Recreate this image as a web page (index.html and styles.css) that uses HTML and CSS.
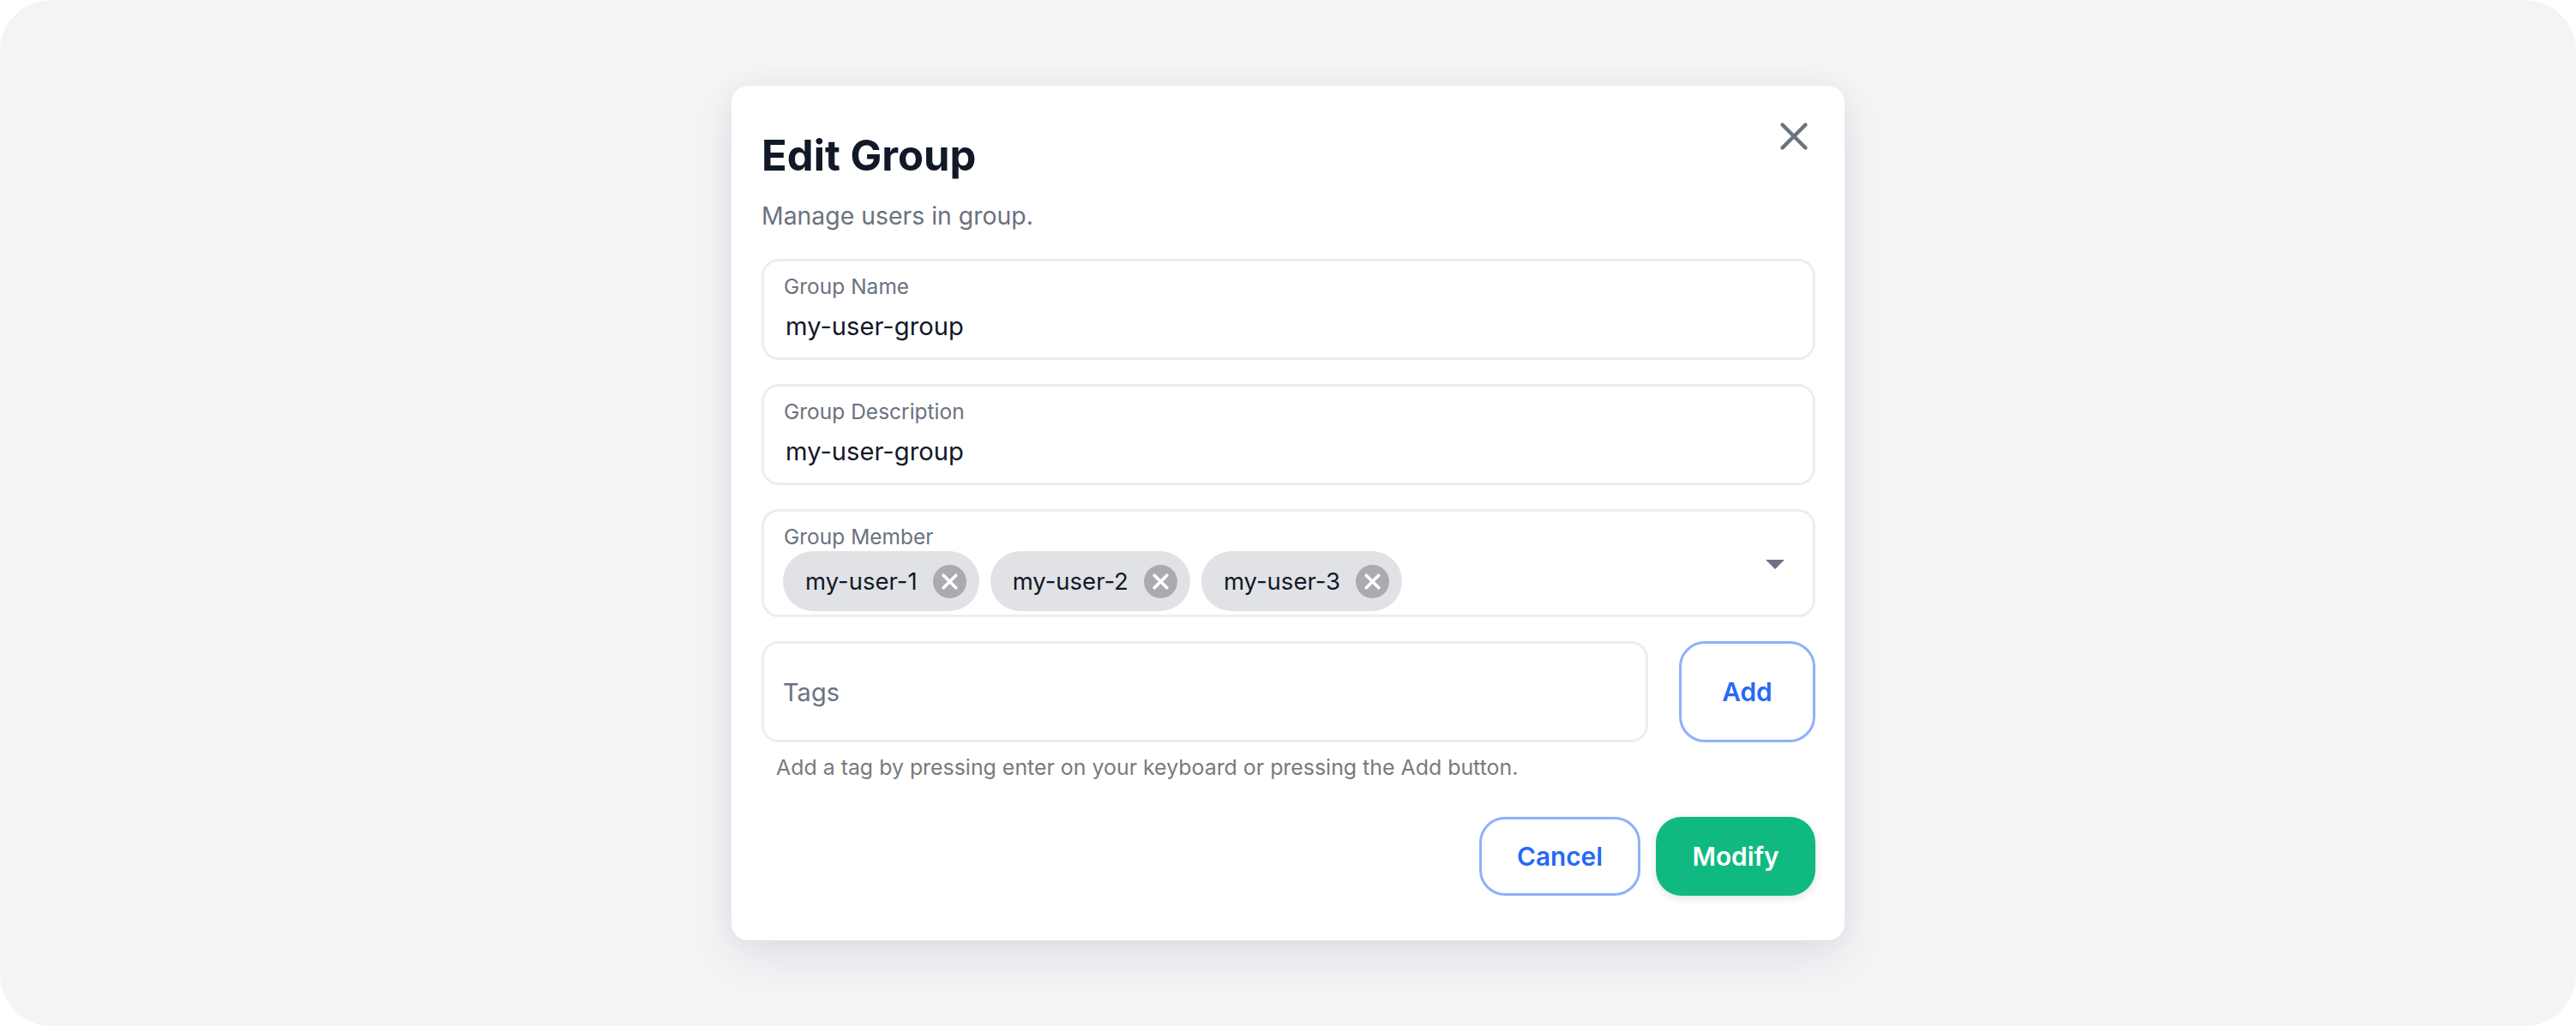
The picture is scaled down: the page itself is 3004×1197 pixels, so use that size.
FILE: index.html
```html
<!DOCTYPE html>
<html lang="en">
<head>
    <meta charset="UTF-8">
    <meta name="viewport" content="width=device-width, initial-scale=1.0">
    <title>Edit Group</title>
    <link rel="stylesheet" href="styles.css">
</head>
<body>

<div class="page">
    <div class="modal">
        <button class="close-btn" aria-label="Close">
            <svg width="40" height="40" viewBox="0 0 40 40" fill="none" stroke="#6b7280" stroke-width="4.4" stroke-linecap="round">
                <path d="M6.5 6.5L33.5 33.5M33.5 6.5L6.5 33.5"/>
            </svg>
        </button>
        <div class="title">Edit Group</div>
        <div class="subtitle">Manage users in group.</div>

        <div class="field">
            <div class="field-label">Group Name</div>
            <div class="field-value">my-user-group</div>
        </div>
        <div class="field">
            <div class="field-label">Group Description</div>
            <div class="field-value">my-user-group</div>
        </div>

        <div class="field member-field">
            <div class="field-label">Group Member</div>
            <div class="chips">
                <div class="chip">my-user-1
                    <svg class="chip-x" viewBox="0 0 40 40"><circle cx="20" cy="20" r="20" fill="#a9abb0"/><path d="M12.5 12.5L27.5 27.5M27.5 12.5L12.5 27.5" stroke="#fff" stroke-width="3.8" stroke-linecap="round"/></svg>
                </div>
                <div class="chip">my-user-2
                    <svg class="chip-x" viewBox="0 0 40 40"><circle cx="20" cy="20" r="20" fill="#a9abb0"/><path d="M12.5 12.5L27.5 27.5M27.5 12.5L12.5 27.5" stroke="#fff" stroke-width="3.8" stroke-linecap="round"/></svg>
                </div>
                <div class="chip">my-user-3
                    <svg class="chip-x" viewBox="0 0 40 40"><circle cx="20" cy="20" r="20" fill="#a9abb0"/><path d="M12.5 12.5L27.5 27.5M27.5 12.5L12.5 27.5" stroke="#fff" stroke-width="3.8" stroke-linecap="round"/></svg>
                </div>
            </div>
            <div class="caret"></div>
        </div>

        <div class="tags-row">
            <div class="tags-input">Tags</div>
            <button class="btn btn-outline add-btn">Add</button>
        </div>
        <div class="hint">Add a tag by pressing enter on your keyboard or pressing the Add button.</div>

        <div class="actions">
            <button class="btn btn-outline cancel-btn">Cancel</button>
            <button class="btn btn-primary">Modify</button>
        </div>
    </div>
</div>

</body>
</html>
```

FILE: styles.css
```css
body { margin: 0; background-color: #ffffff; font-family: Inter, "Noto Sans", sans-serif; }
.page { width: 3004px; height: 1197px; background-color: #f3f4f6; border-radius: 60px; display: flex; align-items: center; justify-content: center; }
.modal { position: relative; box-sizing: border-box; width: 1298px; height: 997px; padding: 0 34px 0 35px; background-color: #ffffff; border-radius: 20px; box-shadow: 0 20px 50px rgba(17, 24, 39, 0.08), 0 0 30px rgba(17, 24, 39, 0.04); }
.close-btn { position: absolute; top: 39px; right: 39px; padding: 0; border: none; background: none; width: 40px; height: 40px; }
.title { margin-top: 53px; font-size: 49px; line-height: 58px; font-weight: 700; color: #111827; }
.subtitle { margin-top: 21px; font-size: 28.4px; line-height: 40px; color: #6b7280; }
.field { box-sizing: border-box; height: 118px; margin-top: 28px; padding: 13px 22px 0; border: 3px solid #ebedf0; border-radius: 20px; }
.subtitle + .field { margin-top: 30px; }
.field-label { padding-left: 1px; font-size: 24.5px; line-height: 33px; color: #6b7280; }
.field-value { margin-top: 10px; padding-left: 3px; font-size: 29.2px; line-height: 40px; color: #111827; }
.member-field { position: relative; height: 126px; }
.chips { display: flex; gap: 13px; }
.chip { display: flex; align-items: center; justify-content: space-between; box-sizing: border-box; height: 70px; padding: 0 15px 0 26px; border-radius: 35px; background-color: #e1e2e5; font-size: 27.5px; color: #111827; gap: 18px; }
.chip-x { width: 39px; height: 39px; }
.caret { position: absolute; top: 56px; right: 33px; width: 0; height: 0; border-left: 11px solid transparent; border-right: 11px solid transparent; border-top: 11px solid #6b7280; }
.tags-row { display: flex; justify-content: space-between; margin-top: 28px; }
.tags-input { box-sizing: border-box; width: 1034px; height: 118px; padding-left: 22px; border: 3px solid #ebedf0; border-radius: 20px; font-size: 29px; line-height: 114px; color: #6b7280; }
.btn { box-sizing: border-box; padding: 0; font-family: inherit; font-size: 29.8px; font-weight: 600; border-radius: 30px; }
.btn-outline { background-color: #ffffff; border: 3px solid #8fb1fb; color: #2769f5; }
.btn-primary { width: 186px; height: 92px; border: none; background-color: #10b981; color: #ffffff; box-shadow: 0 3px 10px rgba(17, 24, 39, 0.12); }
.add-btn { width: 159px; height: 118px; }
.cancel-btn { width: 188px; height: 92px; }
.hint { margin-top: 13px; padding-left: 17px; font-size: 24.9px; line-height: 32px; color: #7a7a7a; }
.actions { display: flex; justify-content: flex-end; gap: 18px; margin-top: 42px; }
```
